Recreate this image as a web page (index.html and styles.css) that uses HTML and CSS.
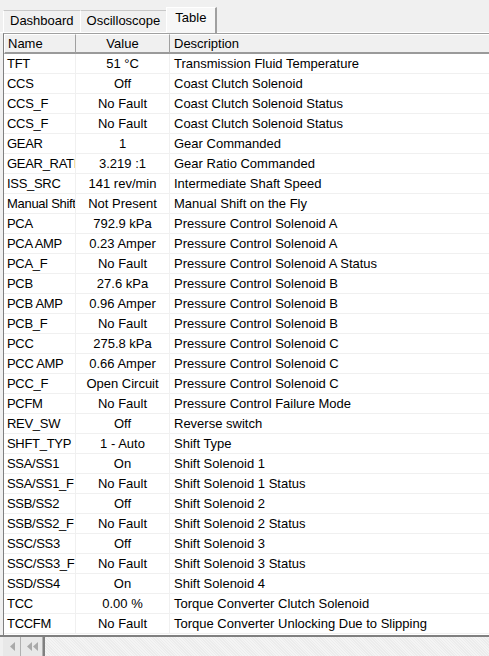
FILE: index.html
```html
<!DOCTYPE html>
<html>
<head>
<meta charset="utf-8">
<link rel="stylesheet" href="styles.css">
</head>
<body>
<div class="tabs">
  <div class="tab">Dashboard</div>
  <div class="tab">Oscilloscope</div>
  <div class="tab active">Table</div>
</div>
<div class="panel">
  <div class="grid">
    <div class="hd c1">Name</div><div class="hd c2">Value</div><div class="hd c3">Description</div>
    <div class="c1">TFT</div><div class="c2">51 °C</div><div class="c3">Transmission Fluid Temperature</div>
    <div class="c1">CCS</div><div class="c2">Off</div><div class="c3">Coast Clutch Solenoid</div>
    <div class="c1">CCS_F</div><div class="c2">No Fault</div><div class="c3">Coast Clutch Solenoid Status</div>
    <div class="c1">CCS_F</div><div class="c2">No Fault</div><div class="c3">Coast Clutch Solenoid Status</div>
    <div class="c1">GEAR</div><div class="c2">1</div><div class="c3">Gear Commanded</div>
    <div class="c1">GEAR_RATIO</div><div class="c2">3.219 :1</div><div class="c3">Gear Ratio Commanded</div>
    <div class="c1">ISS_SRC</div><div class="c2">141 rev/min</div><div class="c3">Intermediate Shaft Speed</div>
    <div class="c1">Manual Shift</div><div class="c2">Not Present</div><div class="c3">Manual Shift on the Fly</div>
    <div class="c1">PCA</div><div class="c2">792.9 kPa</div><div class="c3">Pressure Control Solenoid A</div>
    <div class="c1">PCA AMP</div><div class="c2">0.23 Amper</div><div class="c3">Pressure Control Solenoid A</div>
    <div class="c1">PCA_F</div><div class="c2">No Fault</div><div class="c3">Pressure Control Solenoid A Status</div>
    <div class="c1">PCB</div><div class="c2">27.6 kPa</div><div class="c3">Pressure Control Solenoid B</div>
    <div class="c1">PCB AMP</div><div class="c2">0.96 Amper</div><div class="c3">Pressure Control Solenoid B</div>
    <div class="c1">PCB_F</div><div class="c2">No Fault</div><div class="c3">Pressure Control Solenoid B</div>
    <div class="c1">PCC</div><div class="c2">275.8 kPa</div><div class="c3">Pressure Control Solenoid C</div>
    <div class="c1">PCC AMP</div><div class="c2">0.66 Amper</div><div class="c3">Pressure Control Solenoid C</div>
    <div class="c1">PCC_F</div><div class="c2">Open Circuit</div><div class="c3">Pressure Control Solenoid C</div>
    <div class="c1">PCFM</div><div class="c2">No Fault</div><div class="c3">Pressure Control Failure Mode</div>
    <div class="c1">REV_SW</div><div class="c2">Off</div><div class="c3">Reverse switch</div>
    <div class="c1">SHFT_TYP</div><div class="c2">1 - Auto</div><div class="c3">Shift Type</div>
    <div class="c1">SSA/SS1</div><div class="c2">On</div><div class="c3">Shift Solenoid 1</div>
    <div class="c1">SSA/SS1_F</div><div class="c2">No Fault</div><div class="c3">Shift Solenoid 1 Status</div>
    <div class="c1">SSB/SS2</div><div class="c2">Off</div><div class="c3">Shift Solenoid 2</div>
    <div class="c1">SSB/SS2_F</div><div class="c2">No Fault</div><div class="c3">Shift Solenoid 2 Status</div>
    <div class="c1">SSC/SS3</div><div class="c2">Off</div><div class="c3">Shift Solenoid 3</div>
    <div class="c1">SSC/SS3_F</div><div class="c2">No Fault</div><div class="c3">Shift Solenoid 3 Status</div>
    <div class="c1">SSD/SS4</div><div class="c2">On</div><div class="c3">Shift Solenoid 4</div>
    <div class="c1">TCC</div><div class="c2">0.00 %</div><div class="c3">Torque Converter Clutch Solenoid</div>
    <div class="c1">TCCFM</div><div class="c2">No Fault</div><div class="c3">Torque Converter Unlocking Due to Slipping</div>
  </div>
  <div class="fill"></div>
</div>
<div class="hscroll">
  <div class="btn"><svg width="8" height="9" viewBox="0 0 8 9"><path d="M7 0 L7 9 L2 4.5 Z" fill="#a9a9a9"/></svg></div>
  <div class="btn"><svg width="14" height="9" viewBox="0 0 14 9"><path d="M7 0 L7 9 L2 4.5 Z M13 0 L13 9 L8 4.5 Z" fill="#a9a9a9"/></svg></div>
  <div class="track"></div>
</div>
</body>
</html>
```

FILE: styles.css
```css
* { box-sizing: border-box; }
html, body { margin: 0; padding: 0; }
body {
  width: 489px;
  height: 656px;
  background: #f0f0f0;
  font-family: "Liberation Sans", Arial, sans-serif;
  font-size: 13px;
  color: #000;
  display: flex;
  flex-direction: column;
  overflow: hidden;
}
.tabs {
  display: flex;
  align-items: flex-end;
  height: 33px;
  padding-left: 3px;
  border-bottom: 1px solid #ffffff;
}
.tab {
  height: 22px;
  padding: 1px 6px 0 6px;
  border: 1px solid #c8c8c8;
  border-bottom: none;
  border-left-color: #fff;
  background: #f0f0f0;
  margin-right: -1px;
  line-height: 17px;
}
.tab.active {
  height: 26px;
  padding: 1px 9px 0 8px;
  background: #f7f7f7;
  border-color: #fff #a0a0a0 #fff #fff;
  border-right: 2px solid #a0a0a0;
  margin-bottom: -1px;
  position: relative;
}
.panel {
  flex: 1;
  margin-left: 3px;
  border-left: 1px solid #808080;
  border-top: 1px solid #a0a0a0;
  background: #ffffff;
  display: flex;
  flex-direction: column;
  overflow: hidden;
}
.grid {
  display: grid;
  grid-template-columns: 72px 94px 1fr;
  grid-auto-rows: 20px;
}
.grid > div {
  white-space: nowrap;
  overflow: hidden;
  line-height: 19px;
  border-bottom: 1px solid #f0f0f0;
  border-right: 1px solid #f0f0f0;
}
.c1 { padding-left: 3px; text-overflow: clip; letter-spacing: -0.3px; }
.c2 { text-align: center; }
.c3 { padding-left: 4px; border-right: none !important; }
.grid > .hd {
  background: #f0f0f0;
  border-bottom: 2px solid #9a9a9a;
  border-right: 1px solid #a0a0a0;
  border-top: 1px solid #fff;
  line-height: 17px;
  letter-spacing: 0;
}
.grid > .hd.c1 { border-left: 1px solid #fff; padding-left: 3px; }
.fill { flex: 1; }
.hscroll {
  height: 21px;
  display: flex;
  border-top: 2px solid #808080;
  padding-left: 3px;
  background: #f0f0f0;
}
.btn {
  width: 18px;
  display: flex;
  align-items: center;
  justify-content: center;
  border-right: 1px solid #b0b0b0;
  background: #e8e8e8;
}
.btn + .btn { width: 22px; }
.track {
  flex: 1;
  border-left: 2px solid #808080;
  background: repeating-linear-gradient(45deg, #f4f4f4 0 1px, #ececec 1px 2px);
}
```
